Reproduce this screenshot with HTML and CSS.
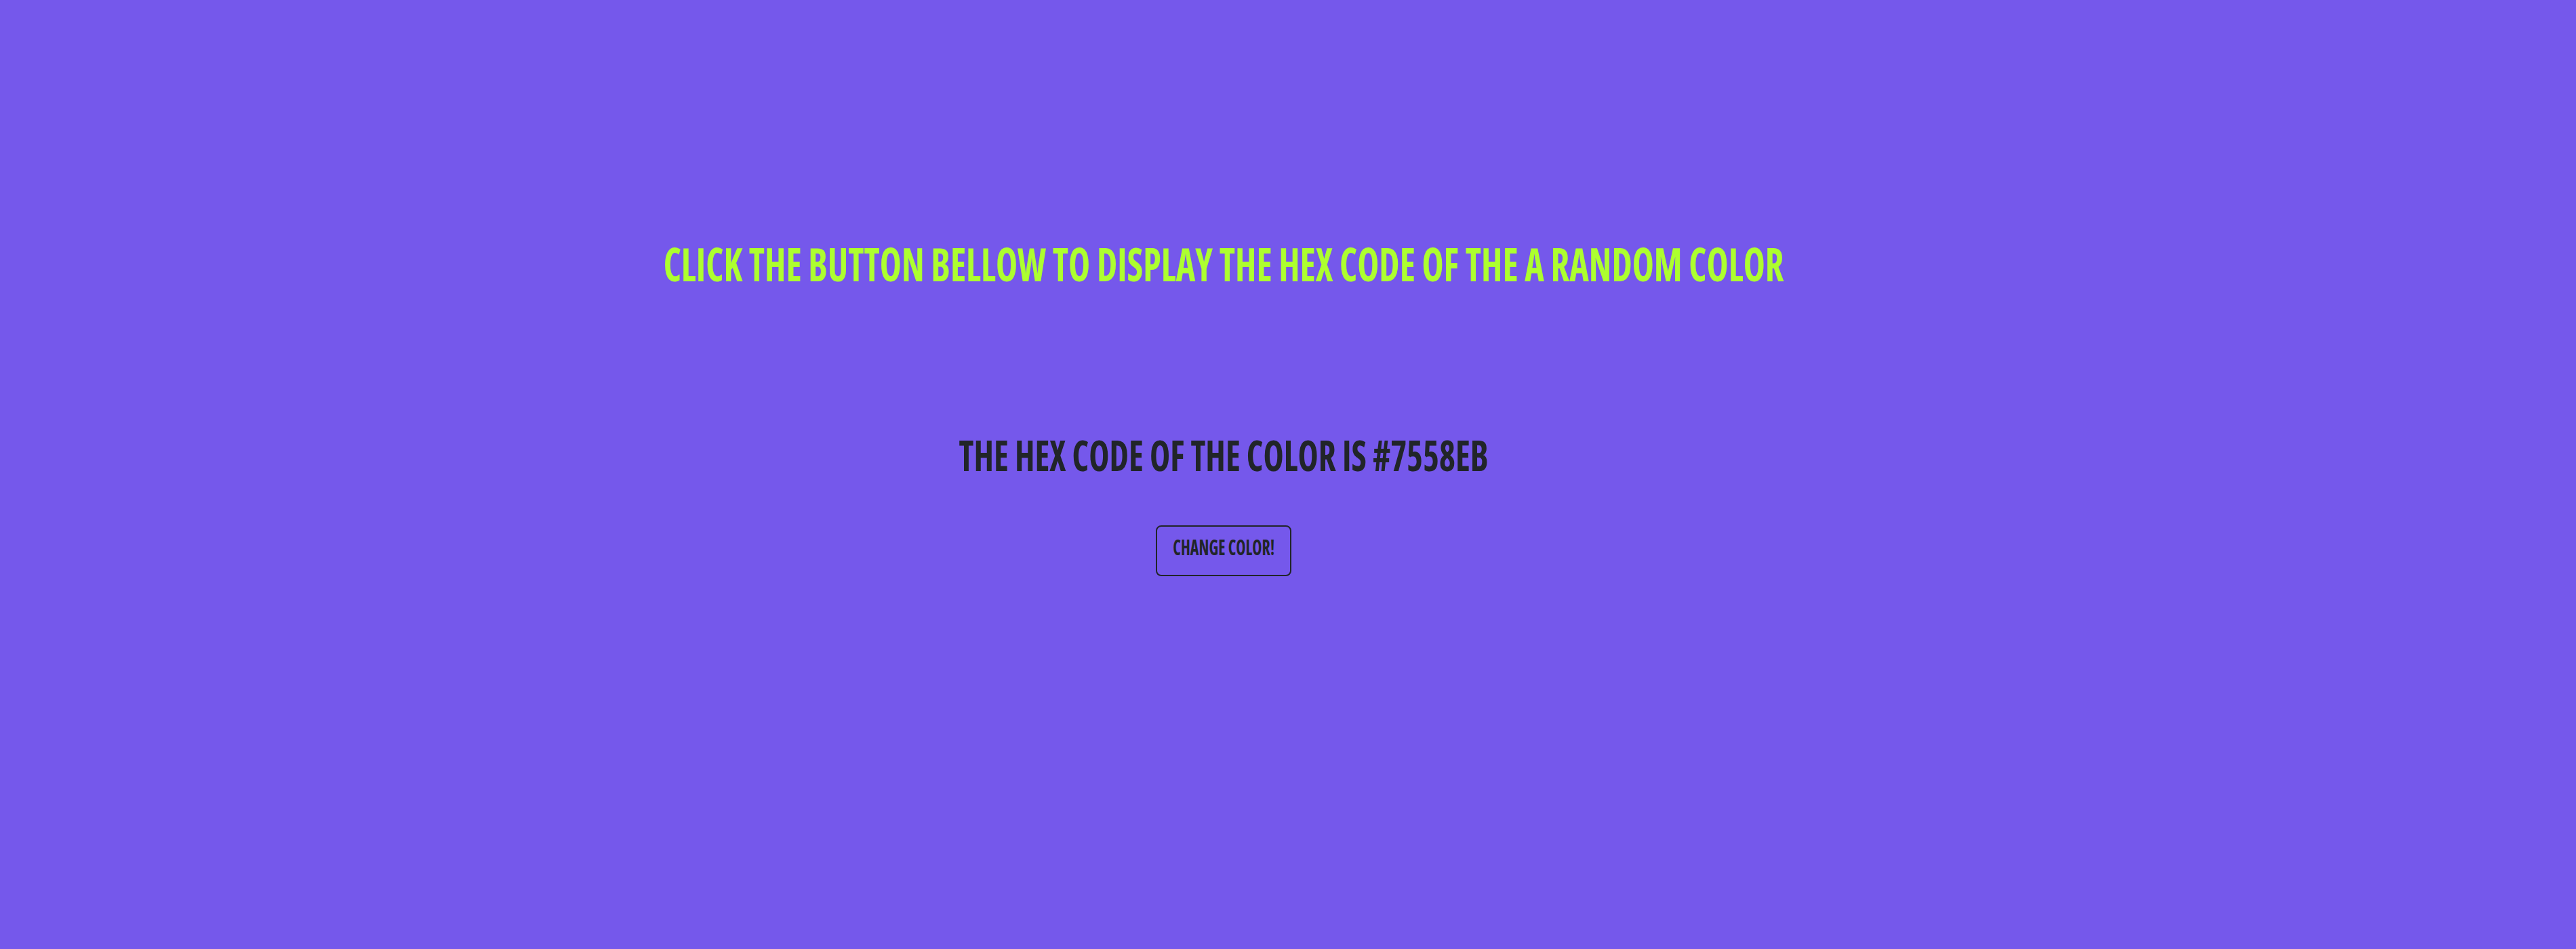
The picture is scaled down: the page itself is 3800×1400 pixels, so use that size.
FILE: index.html
```html
<!DOCTYPE html>
<html lang="en">
<head>
<meta charset="utf-8">
<title>Random Hex Color</title>
<link rel="stylesheet" href="styles.css">
</head>
<body>
<main class="page">
  <h1 class="title"><span class="squeeze squeeze-title">Click the button bellow to display the hex code of the a random color</span></h1>
  <h2 class="hex"><span class="squeeze squeeze-hex">The hex code of the color is #7558EB</span></h2>
  <button class="change-btn" type="button"><span class="squeeze squeeze-btn">Change color!</span></button>
</main>
</body>
</html>
```
FILE: styles.css
```css
html, body {
  margin: 0;
  padding: 0;
}

body {
  background: #7558EB;
  min-height: 1400px;
  font-family: "Open Sans", "Liberation Sans", sans-serif;
  color: #212529;
}

.page {
  display: flex;
  flex-direction: column;
  align-items: center;
  padding: 355px 190px 0 0;
  text-align: center;
}

.squeeze {
  display: inline-block;
  white-space: nowrap;
  font-stretch: 75%;
  font-weight: 700;
  text-transform: uppercase;
  line-height: 1;
  transform-origin: center center;
}

.title {
  margin: 0;
  font-size: 68.6px;
  line-height: 1;
  color: #ADFF2F;
  font-weight: 700;
}

.squeeze-title {
  transform: scaleX(0.79);
}

.hex {
  margin: 215px 0 0;
  font-size: 63px;
  line-height: 1;
  color: #212529;
  font-weight: 700;
}

.squeeze-hex {
  transform: scaleX(0.81);
}

.change-btn {
  margin-top: 73px;
  width: 200px;
  box-sizing: border-box;
  padding: 15.6px 0 24.2px;
  background: transparent;
  border: 2px solid #212529;
  border-radius: 8px;
  color: #212529;
  font-family: "Open Sans", "Liberation Sans", sans-serif;
  font-size: 31.2px;
  line-height: 1;
  cursor: pointer;
  display: flex;
  justify-content: center;
}

.squeeze-btn {
  transform: scaleX(0.77);
}
```
